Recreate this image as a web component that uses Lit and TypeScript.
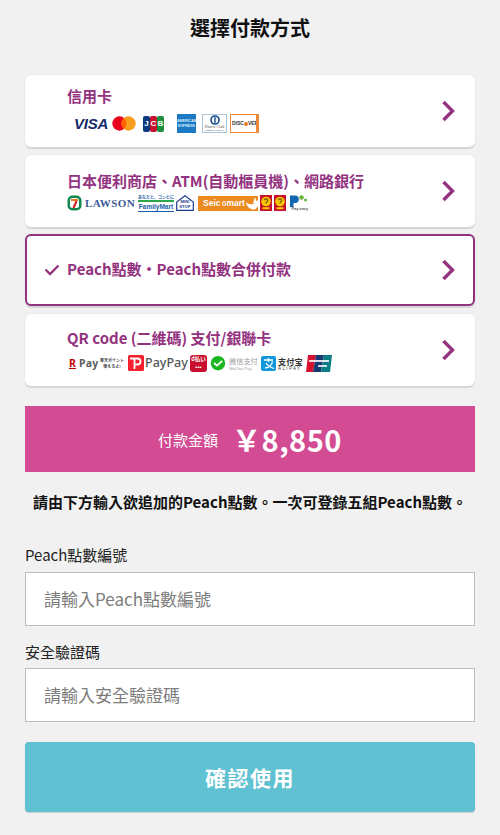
import { LitElement, html, css } from "lit";
import { customElement } from "lit/decorators.js";

const chevron = html`<svg class="chev" width="16" height="24" viewBox="0 0 16 24"><path d="M3.5 3 L12.5 12 L3.5 21" fill="none" stroke="#93327f" stroke-width="3.4"/></svg>`;

const visa = html`<span class="visa">VISA</span>`;
const mc = html`<svg width="24" height="15" viewBox="0 0 24 15" class="g5"><circle cx="7.5" cy="7.5" r="7.2" fill="#e8001c"/><circle cx="16.5" cy="7.5" r="7.2" fill="#f79e1b"/><path d="M12 2.1a7.2 7.2 0 0 1 0 10.8a7.2 7.2 0 0 1 0-10.8z" fill="#ff5f00"/></svg>`;
const jcb = html`<span class="jcb g7"><b>J</b><b>C</b><b>B</b></span>`;
const amex = html`<span class="amex g13">AMERICAN<br />EXPRESS</span>`;
const diners = html`<span class="diners g6"><svg width="10" height="10" viewBox="0 0 10 10"><circle cx="5" cy="5" r="4.8" fill="#16498a"/><circle cx="5" cy="5" r="3.2" fill="#fff"/><rect x="4.3" y="2.2" width="1.4" height="5.6" fill="#16498a"/></svg><b>Diners Club</b><i>INTERNATIONAL</i></span>`;
const discover = html`<span class="discover g3">DISC<i></i>VER</span>`;

const seven = html`<svg width="15" height="16" viewBox="0 0 15 16"><rect x=".5" y=".5" width="14" height="15" rx="5" fill="#12894e"/><rect x="3" y="3" width="9" height="10" rx="2.5" fill="#fff"/><rect x="4" y="4" width="7" height="2" fill="#ee7a1f"/><path d="M9.5 6 L6.5 13" stroke="#d8232a" stroke-width="2.2"/></svg>`;
const lawson = html`<span class="lawson g3">LAWSON</span>`;
const family = html`<span class="family g3"><b>あなたと、コンビに</b><i></i><em>FamilyMart</em></span>`;
const ministop = html`<span class="ministop g2"><svg width="18" height="16" viewBox="0 0 18 16"><path d="M.7 15.3 V7 L9 .8 L17.3 7 V15.3 Z" fill="#fff" stroke="#1b3d8f" stroke-width="1.2"/></svg><b>MINI<br />STOP</b></span>`;
const seico = html`<span class="seico g4">Seic<s></s>mart<svg width="15" height="15" viewBox="0 0 16 15"><path d="M1 6 C2 12 6 14 9 14 C13 14 15 9 16 2 L12 5 L11 1 C9 3 9 6 9 8 C6 9 3 8 1 6Z" fill="#fff"/></svg></span>`;
const square = (x: string) => html`<svg width="12" height="16" viewBox="0 0 12 16" class=${x}><rect width="12" height="16" fill="#c8102e"/><circle cx="6" cy="6.5" r="4.8" fill="#f6c800"/><path d="M4.3 5.2 C4.3 3.3 7.7 3.3 7.7 5.2 C7.7 6.6 6 6.6 6 8.4" fill="none" stroke="#7a4a00" stroke-width="1.2"/><rect x="2.5" y="12.2" width="7" height="2" fill="#f6c800"/></svg>`;
const payeasy = html`<span class="payeasy g3"><svg width="19" height="12" viewBox="0 0 19 12"><path d="M1 .5 H6.5 C11 .5 11 8 6.5 8 H4.5 V12 H1 Z" fill="#1266b3"/><circle cx="12.5" cy="2.5" r="2.3" fill="#6cb33f"/><circle cx="16.5" cy="5" r="1.5" fill="#6cb33f"/></svg><b>Pay-easy</b></span>`;

const rpay = html`<span class="rpay"><u>R</u> Pay</span>`;
const rakuten = html`<span class="rakuten g3"><b>楽天ポイント</b><b>使えるよ!</b></span>`;
const ppIcon = html`<svg width="16" height="16" viewBox="0 0 16 16" class="g4"><rect width="16" height="16" rx="1.5" fill="#f5222d"/><path d="M2 3.5 H9.5 C13.5 3.5 13.5 9.5 9.5 9.5 H6.5 V14 M6.5 3.5 V9.5" fill="none" stroke="#fff" stroke-width="1.8"/></svg>`;
const ppText = html`<span class="pptext">PayPay</span>`;
const dbarai = html`<span class="dbarai"><b>d払い</b><i>•••</i></span>`;
const wechat = html`<svg width="16" height="15" viewBox="0 0 16 15" class="g3"><circle cx="8" cy="7.2" r="7.2" fill="#1bb723"/><path d="M4 7 L7 9.6 L12.2 4.8" fill="none" stroke="#fff" stroke-width="1.7"/></svg>`;
const wxText = html`<span class="wx"><b>微信支付</b><i>WeChat Pay</i></span>`;
const aliIcon = html`<svg width="15" height="15" viewBox="0 0 15 15" class="g2"><rect width="15" height="15" rx="2" fill="#1296db"/><path d="M3 4 H12 M7.5 2 V6 M4 12 C8 12 11 9 11.5 5.5 M5 7 C7 10 10 11.5 13 12.5" fill="none" stroke="#fff" stroke-width="1.3"/></svg>`;
const aliText = html`<span class="ali"><b>支付宝</b><i>ALIPAY</i></span>`;
const union = html`<svg width="26" height="17" viewBox="0 0 26 17" class="g3"><path d="M2 0 H10 L7 17 H0 Z" fill="#d6112f"/><path d="M10 0 H18 L15 17 H7 Z" fill="#14386f"/><path d="M18 0 H26 L24 17 H15 Z" fill="#0b7c84"/><rect x="3" y="5" width="20" height="2" fill="#fff" opacity=".85"/><rect x="12" y="10" width="9" height="2" fill="#fff" opacity=".8"/></svg>`;

@customElement("app-root")
export class AppRoot extends LitElement {
  static styles = css`
    :host {
      display: block;
      width: 500px;
      height: 835px;
      overflow: hidden;
      background: #f1f1f1;
      font-family: "Noto Sans CJK TC", "Noto Sans", sans-serif;
      color: #111;
    }
    * { box-sizing: border-box; }
    .wrap { padding: 0 25px; display: flex; flex-direction: column; }
    h1 { margin: 0; height: 56px; font-size: 20px; line-height: 56px; font-weight: 700; text-align: center; color: #111; }
    .cards { margin-top: 19px; display: flex; flex-direction: column; gap: 7.5px; }
    .card {
      height: 72px; background: #fff; border-radius: 6px;
      box-shadow: 0 2px 0 #d6d6d6, 0 0 2px #ddd;
      padding: 0 19px 0 42px; display: flex; align-items: center; justify-content: space-between;
    }
    .card.on { border: 2px solid #93327f; padding: 0 17px 0 17px; justify-content: flex-start; }
    .check { margin-right: 7px; flex: none; }
    .on .chev { margin-left: auto; }
    .title { font-size: 15px; font-weight: 700; color: #93327f; line-height: 22px; white-space: nowrap; }
    .on .title { padding-bottom: 2px; }
    .logos { display: flex; align-items: center; }
    .logos.a { padding-left: 7px; height: 20px; margin-top: 7px; margin-bottom: 4px; }
    .logos.b { height: 16px; margin-top: 3px; }
    .logos.c { height: 18px; margin-top: 5px; }
    .logos > * { flex: none; }
    .g2 { margin-left: 2px; } .g3 { margin-left: 3px; } .g4 { margin-left: 4px; }
    .g5 { margin-left: 5px; } .g6 { margin-left: 6px; } .g7 { margin-left: 7px; } .g13 { margin-left: 13px; }
    .visa { font: italic 700 15px/16px "Liberation Sans", sans-serif; color: #14296b; width: 33px; letter-spacing: -.2px; white-space: nowrap; }
    .jcb { display: flex; width: 21px; height: 16px; }
    .jcb b { flex: 1; color: #fff; font: 700 8px/16px "Liberation Sans", sans-serif; text-align: center; border-radius: 2px; background: #0b3a82; }
    .jcb b:nth-child(2) { background: #c4122f; }
    .jcb b:nth-child(3) { background: #1a8f3c; }
    .amex { width: 19px; height: 19px; background: #1c79c4; color: #d4ebfa; font: 700 3.6px/4.5px "Liberation Sans", sans-serif; text-align: center; padding-top: 5px; white-space: nowrap; overflow: hidden; }
    .diners { width: 25px; height: 19px; background: #fff; border: 1px solid #a9c6d8; display: flex; flex-direction: column; align-items: center; overflow: hidden; color: #555; }
    .diners b { font: 400 4px/4px "Liberation Serif", serif; white-space: nowrap; }
    .diners i { font: normal 2.4px/3px "Liberation Sans", sans-serif; white-space: nowrap; }
    .discover { width: 29px; height: 19px; border: 1px solid #ee8a37; border-right-width: 3px; background: #fff; font: 700 5px/17px "Liberation Sans", sans-serif; color: #333; white-space: nowrap; overflow: hidden; display: flex; align-items: center; padding-left: 1px; }
    .discover i { width: 4px; height: 4px; border-radius: 50%; background: #ee7a1f; flex: none; }
    .lawson { font: 700 11px/16px "Liberation Serif", serif; color: #3d5a98; width: 50px; letter-spacing: .4px; white-space: nowrap; }
    .family { width: 36px; height: 16px; display: flex; flex-direction: column; align-items: center; }
    .family b { font: 700 4px/5px "Noto Sans CJK JP", sans-serif; color: #1a5ea8; white-space: nowrap; }
    .family i { width: 36px; height: 2px; background: #2aa54a; margin-bottom: 1px; flex: none; }
    .family em { font: 700 6.5px/8px "Liberation Sans", sans-serif; color: #1a5ea8; width: 36px; text-align: center; border-bottom: 1px solid #1a5ea8; white-space: nowrap; }
    .ministop { position: relative; width: 18px; height: 16px; }
    .ministop svg { display: block; }
    .ministop b { position: absolute; left: 0; right: 0; top: 5px; font: 700 4.2px/4.6px "Liberation Sans", sans-serif; color: #1b3d8f; text-align: center; }
    .seico { width: 60px; height: 15px; background: #ed8a1f; color: #fff; font: 700 8.5px/15px "Liberation Sans", sans-serif; padding-left: 5px; display: flex; align-items: center; white-space: nowrap; }
    .seico s { width: 4px; height: 5px; border: 1px solid #fff; border-radius: 50%; display: inline-block; margin: 1px 1px 0; flex: none; }
    .seico svg { margin-left: auto; flex: none; }
    .payeasy { width: 19px; height: 16px; display: flex; flex-direction: column; }
    .payeasy b { font: 700 3.8px/4px "Liberation Sans", sans-serif; color: #555; white-space: nowrap; text-align: right; }
    .rpay { font: 700 10.5px/16px "Noto Sans", sans-serif; color: #5a5a5a; margin-left: 2px; width: 28px; white-space: nowrap; letter-spacing: .2px; }
    .rpay u { color: #bf0000; text-decoration-thickness: 1px; }
    .rakuten { width: 24px; display: flex; flex-direction: column; align-items: center; font-size: 4px; line-height: 6px; color: #444; }
    .rakuten b { white-space: nowrap; }
    .pptext { font: 500 12.5px/18px "Noto Sans", sans-serif; color: #555; margin-left: 1px; width: 42px; white-space: nowrap; }
    .dbarai { width: 17px; height: 17px; margin-left: 3px; border-radius: 3px; background: #c8102e; color: #fff; display: flex; flex-direction: column; align-items: center; overflow: hidden; }
    .dbarai b { font-size: 5.5px; line-height: 9px; white-space: nowrap; }
    .dbarai i { font: 700 6px/6px "Liberation Sans", sans-serif; }
    .wx { width: 30px; margin-left: 3px; display: flex; flex-direction: column; color: #9a9a9a; }
    .wx b { font-size: 7.2px; font-weight: 400; line-height: 10px; white-space: nowrap; }
    .wx i { font: normal 4px/5px "Liberation Sans", sans-serif; white-space: nowrap; }
    .ali { width: 25px; margin-left: 2px; display: flex; flex-direction: column; color: #333; }
    .ali b { font: 700 8.2px/10px "Noto Sans CJK SC", sans-serif; white-space: nowrap; }
    .ali i { font: normal 4.5px/5px "Liberation Sans", sans-serif; letter-spacing: 1.4px; white-space: nowrap; }
    .amount {
      margin-top: 20.5px; height: 66px; background: #d24b93; color: #fff; display: flex; align-items: center; justify-content: center; gap: 14px;
    }
    .amount span { font-size: 15px; }
    .amount strong { font-size: 29px; font-weight: 700; letter-spacing: .5px; line-height: 1; }
    .note { margin: 19px -5px 0; font-size: 15px; font-weight: 700; line-height: 22px; text-align: center; color: #111; white-space: nowrap; }
    label { display: block; font-size: 15px; line-height: 20px; color: #222; }
    .field { display: flex; flex-direction: column; gap: 7px; }
    .f1 { margin-top: 32px; }
    .f2 { margin-top: 16px; gap: 6px; }
    .input { height: 54px; background: #fff; border: 1px solid #bdbdbd; padding: 0 18px 2px; display: flex; align-items: center; font-size: 17px; color: #7c7c7c; }
    .btn { margin-top: 20px; height: 70px; background: #5fc1d1; border-radius: 4px; color: #fff; font-size: 21px; font-weight: 700; display: flex; align-items: center; justify-content: center; letter-spacing: 1.5px; box-shadow: 0 1px 1px #ccc; }
  `;

  render() {
    const check = html`<svg class="check" width="16" height="14" viewBox="0 0 16 14"><path d="M1.5 6.5 L6 11 L14.5 2.5" fill="none" stroke="#93327f" stroke-width="2.3"/></svg>`;
    return html`<div class="wrap">
      <h1>選擇付款方式</h1>
      <div class="cards">
        <div class="card"><div>
          <div class="title">信用卡</div>
          <div class="logos a">${visa}${mc}${jcb}${amex}${diners}${discover}</div>
        </div>${chevron}</div>
        <div class="card"><div>
          <div class="title">日本便利商店、ATM(自動櫃員機)、網路銀行</div>
          <div class="logos b">${seven}${lawson}${family}${ministop}${seico}${square("g2")}${square("g2")}${payeasy}</div>
        </div>${chevron}</div>
        <div class="card on">${check}<div class="title">Peach點數・Peach點數合併付款</div>${chevron}</div>
        <div class="card"><div>
          <div class="title">QR code (二維碼) 支付/銀聯卡</div>
          <div class="logos c">${rpay}${rakuten}${ppIcon}${ppText}${dbarai}${wechat}${wxText}${aliIcon}${aliText}${union}</div>
        </div>${chevron}</div>
      </div>
      <div class="amount"><span>付款金額</span><strong>￥8,850</strong></div>
      <div class="note">請由下方輸入欲追加的Peach點數。一次可登錄五組Peach點數。</div>
      <div class="field f1"><label>Peach點數編號</label><div class="input">請輸入Peach點數編號</div></div>
      <div class="field f2"><label>安全驗證碼</label><div class="input">請輸入安全驗證碼</div></div>
      <div class="btn">確認使用</div>
    </div>`;
  }
}
